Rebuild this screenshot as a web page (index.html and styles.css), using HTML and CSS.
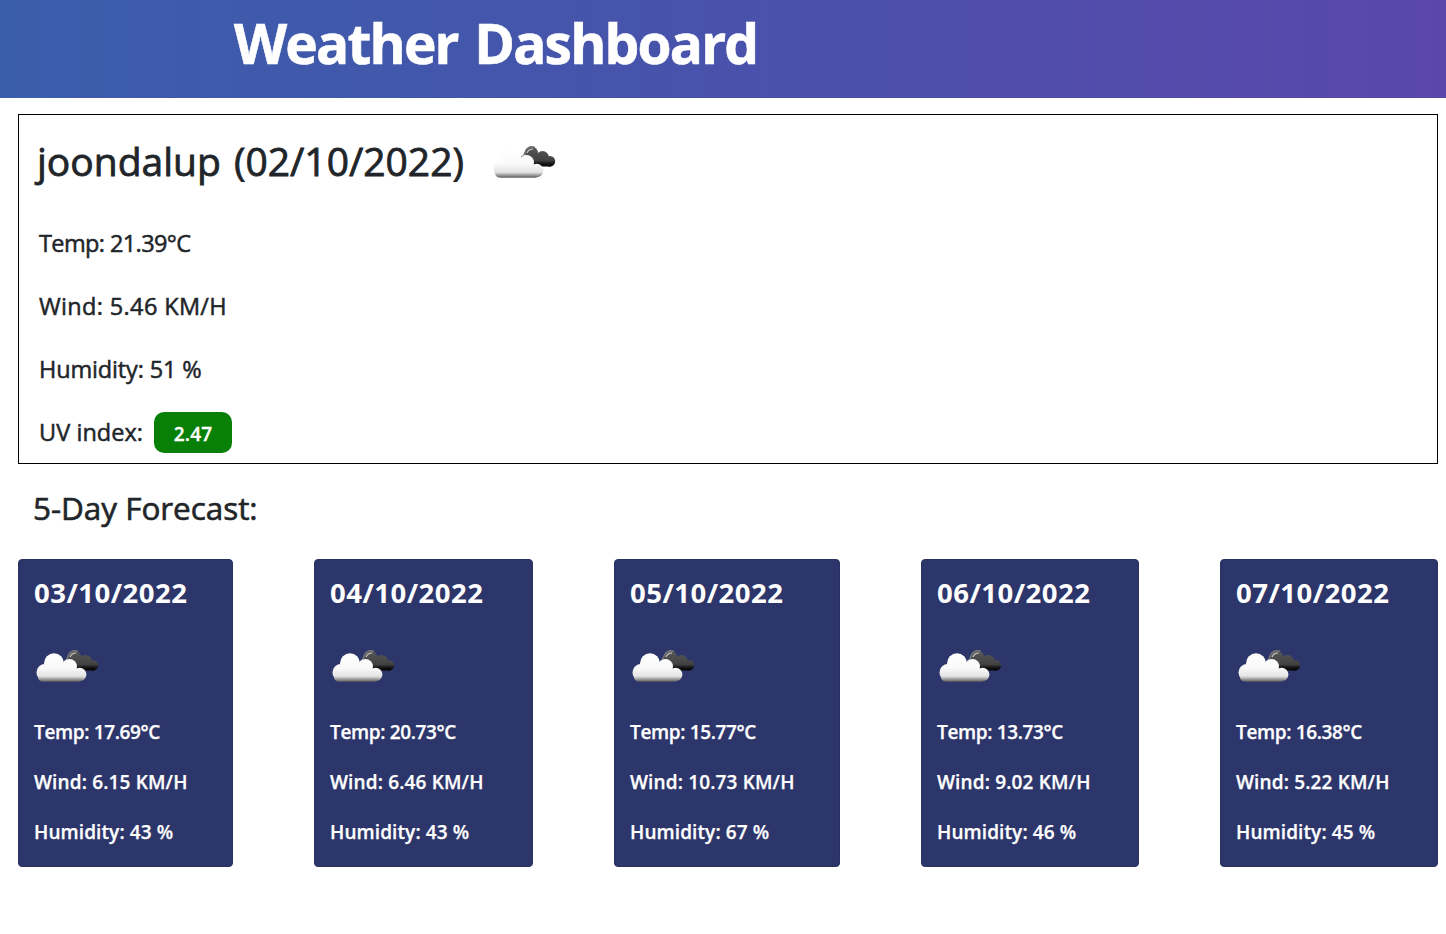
FILE: index.html
```html
<!DOCTYPE html>
<html lang="en">
<head>
<meta charset="utf-8">
<title>Weather Dashboard</title>
<link rel="stylesheet" href="styles.css">
</head>
<body>
<svg class="defs" width="0" height="0" aria-hidden="true">
  <defs>
    <linearGradient id="light" gradientUnits="userSpaceOnUse" x1="0" y1="4" x2="0" y2="33">
      <stop offset="0" stop-color="#fff"/><stop offset=".5" stop-color="#fafafa"/><stop offset=".8" stop-color="#e4e4e4"/><stop offset=".87" stop-color="#b5b5b5"/><stop offset="1" stop-color="#555"/>
    </linearGradient>
    <linearGradient id="dark" gradientUnits="userSpaceOnUse" x1="0" y1="1" x2="0" y2="21.500">
      <stop offset="0" stop-color="#5a5a5a"/><stop offset=".7" stop-color="#414141"/><stop offset=".85" stop-color="#181818"/><stop offset="1" stop-color="#000"/>
    </linearGradient>
    <filter id="soft" x="-10%" y="-10%" width="120%" height="130%"><feGaussianBlur stdDeviation=".55"/></filter>
    <symbol id="clouds" viewBox="0 0 66 36">
      <g filter="url(#soft)">
        <g fill="url(#dark)">
          <circle cx="38.500" cy="8" r="6.500"/><circle cx="49.500" cy="12.500" r="6.500"/><circle cx="57" cy="16.300" r="5.200"/>
          <path d="M33 8h14l11 8v5.500H36Z"/>
        </g>
        <path d="M28 12c2 0 3-1 3.700-4C33 3 37 .5 42 2.500" fill="none" stroke="#777" stroke-width="1.500"/>
        <path d="M34 8c1-2.500 3-4 6-4" fill="none" stroke="#ccc" stroke-width="1.200"/>
        <g fill="url(#light)">
          <circle cx="18" cy="14.300" r="10"/><circle cx="33.500" cy="17.500" r="7.500"/><circle cx="43.600" cy="25.500" r="6.800"/><circle cx="9" cy="23.500" r="8.500"/>
          <path d="M9 16h27l7.500 6v10.700H8c-3 0-5-1-6-3.500Z"/>
        </g>
      </g>
    </symbol>
  </defs>
</svg>
<header class="header"><h1>Weather Dashboard</h1></header>
<main class="main">
  <section class="current">
    <div class="place"><h2>joondalup (02/10/2022)</h2><svg class="icon"><use href="#clouds"/></svg></div>
    <p class="temp">Temp: 21.39°C</p>
    <p class="wind">Wind: 5.46 KM/H</p>
    <p class="humidity">Humidity: 51 %</p>
    <p class="uv">UV index: <span class="badge">2.47</span></p>
  </section>
  <h3 class="forecast-title">5-Day Forecast:</h3>
  <section class="forecast">
    <article class="card first"><h4>03/10/2022</h4><svg class="icon"><use href="#clouds"/></svg><p class="temp">Temp: 17.69°C</p><p class="wind">Wind: 6.15 KM/H</p><p class="humidity">Humidity: 43 %</p></article>
    <article class="card"><h4>04/10/2022</h4><svg class="icon"><use href="#clouds"/></svg><p class="temp">Temp: 20.73°C</p><p class="wind">Wind: 6.46 KM/H</p><p class="humidity">Humidity: 43 %</p></article>
    <article class="card wide"><h4>05/10/2022</h4><svg class="icon"><use href="#clouds"/></svg><p class="temp">Temp: 15.77°C</p><p class="wind">Wind: 10.73 KM/H</p><p class="humidity">Humidity: 67 %</p></article>
    <article class="card mid"><h4>06/10/2022</h4><svg class="icon"><use href="#clouds"/></svg><p class="temp">Temp: 13.73°C</p><p class="wind">Wind: 9.02 KM/H</p><p class="humidity">Humidity: 46 %</p></article>
    <article class="card mid"><h4>07/10/2022</h4><svg class="icon"><use href="#clouds"/></svg><p class="temp">Temp: 16.38°C</p><p class="wind">Wind: 5.22 KM/H</p><p class="humidity">Humidity: 45 %</p></article>
  </section>
</main>
</body>
</html>
```
FILE: styles.css
```css
* { box-sizing: border-box; }
body { margin: 0; background: #fff; color: #212529; font-family: "Open Sans", "Noto Sans", sans-serif; }
h1, h2, h3, h4, p { margin: 0; white-space: nowrap; }
.defs { position: absolute; }
.header { height: 98px; padding: 7px 0 0 234px; background: linear-gradient(90deg, #3b5eab, #4257ab 30%, #5a47ab); color: #fff; }
.header h1 { font-size: 55px; line-height: 72px; font-weight: 700; letter-spacing: -1.8px; word-spacing: 4px; -webkit-text-stroke: .6px #fff; }
.main { padding: 16px 8px 0 18px; }
.current { height: 350px; border: 1px solid #000; padding: 14px 20px 0 20px; }
.place { display: flex; align-items: center; height: 64px; margin: 0 0 18px -2px; gap: 29px; }
.place h2 { font-size: 39px; line-height: 48px; font-weight: 500; letter-spacing: 0; word-spacing: 3px; -webkit-text-stroke: .8px #212529; }
.icon { display: block; width: 66px; height: 36px; }
.place .icon { margin-top: 4px; }
.current p { display: flex; align-items: center; height: 63px; font-size: 23.5px; font-weight: 500; -webkit-text-stroke: .5px #212529; }
.current .temp { letter-spacing: -.6px; }
.current .wind { letter-spacing: .35px; }
.current .humidity { letter-spacing: -.15px; }
.current .uv { letter-spacing: .05px; }
.current .badge { margin: 2px 0 0 11px; width: 78px; height: 41px; padding-top: 2px; border-radius: 10px; background: #088008; color: #fff; font-size: 19px; font-weight: 600; letter-spacing: .2px; -webkit-text-stroke: .3px #fff; display: flex; align-items: center; justify-content: center; }
.forecast-title { margin: 24px 0 31px 15px; font-size: 31.5px; line-height: 40px; font-weight: 500; letter-spacing: -.05px; -webkit-text-stroke: .6px #212529; }
.forecast { display: flex; justify-content: space-between; }
.card { width: 219px; height: 308px; padding: 15px; border-radius: 4px; border: 1px solid #29325f; background: #2d366b; color: #fff; }
.first { width: 215px; }
.wide { width: 226px; }
.mid { width: 218px; }
.card h4 { font-size: 27.5px; line-height: 36px; font-weight: 700; letter-spacing: .5px; }
.card .icon { margin: 38px 0 22px 2px; }
.card p { height: 50px; line-height: 50px; font-size: 19px; font-weight: 600; letter-spacing: -.35px; -webkit-text-stroke: .25px #fff; }
.card .wind { letter-spacing: .15px; }
.card .humidity { letter-spacing: .1px; }
```
